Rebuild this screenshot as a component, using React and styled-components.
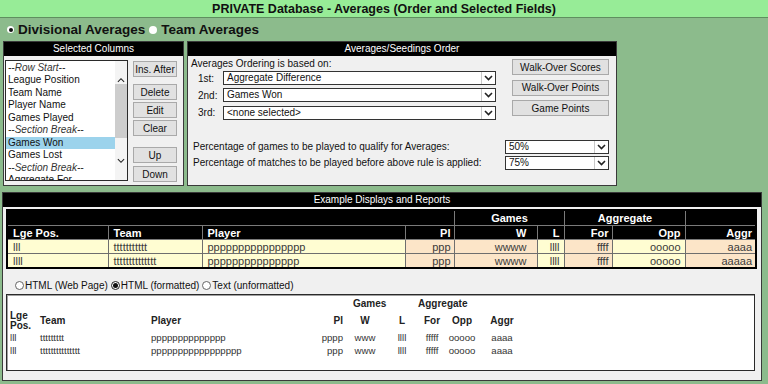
import React from 'react';
import styled, { createGlobalStyle } from 'styled-components';

const GlobalStyle = createGlobalStyle`
  html, body { margin: 0; padding: 0; }
  body {
    background: #8cbb8c;
    font-family: "Liberation Sans", Arial, sans-serif;
    color: #111;
    width: 768px;
    height: 384px;
    overflow: hidden;
  }
`;

const Page = styled.div`
  display: flex;
  flex-direction: column;
`;

const TitleBar = styled.div`
  height: 17px;
  background: #97ec97;
  border-bottom: 1px solid #5f8f5f;
  display: flex;
  align-items: center;
  justify-content: center;
  font-size: 12.5px;
  font-weight: bold;
`;

const ModeRow = styled.div`
  height: 23px;
  display: flex;
  align-items: center;
  padding-left: 7px;
  font-size: 13.5px;
  font-weight: bold;
`;

const ModeOption = styled.label`
  display: flex;
  align-items: center;
  gap: 4px;
  margin-right: 4px;
`;

const Dot = styled.span`
  width: ${p => p.$size}px;
  height: ${p => p.$size}px;
  border-radius: 50%;
  background: #fff;
  box-sizing: border-box;
  border: ${p => (p.$border ? `1px solid ${p.$checked ? '#222' : '#666'}` : 'none')};
  display: inline-flex;
  align-items: center;
  justify-content: center;
  flex: none;
  &::after {
    content: '';
    display: ${p => (p.$checked ? 'block' : 'none')};
    width: ${p => Math.round(p.$size / 2)}px;
    height: ${p => Math.round(p.$size / 2)}px;
    border-radius: 50%;
    background: #111;
  }
`;

const TopRow = styled.div`
  display: flex;
  gap: 3px;
  padding-left: 3px;
  height: 145px;
`;

const Panel = styled.div`
  width: ${p => p.$w}px;
  box-sizing: border-box;
  border: 1px solid #3a3a3a;
  background: #f0f0f0;
  display: flex;
  flex-direction: column;
`;

const PanelHeader = styled.div`
  height: 14px;
  line-height: 14px;
  background: #000;
  color: #fff;
  font-size: 10px;
  text-align: center;
`;

const ColumnsBody = styled.div`
  display: flex;
  padding: 4px 0 0 1px;
`;

const ListBox = styled.div`
  width: 123px;
  height: 121px;
  box-sizing: border-box;
  border: 1px solid #2a2a2a;
  background: #fff;
  display: flex;
  overflow: hidden;
`;

const ListItems = styled.div`
  flex: 1;
  padding-top: 0.5px;
  overflow: hidden;
`;

const ListItem = styled.div`
  height: 12.5px;
  line-height: 12.5px;
  font-size: 10px;
  padding-left: 2px;
  white-space: nowrap;
  font-style: ${p => (p.$italic ? 'italic' : 'normal')};
  color: ${p => (p.$italic ? '#333' : '#111')};
  background: ${p => (p.$selected ? '#9cd3ec' : 'transparent')};
`;

const ScrollBar = styled.div`
  width: 12px;
  background: #f4f4f4;
  display: flex;
  flex-direction: column;
  align-items: center;
`;

const ScrollArrow = styled.div`
  height: 22px;
  display: flex;
  align-items: ${p => (p.$down ? 'flex-start' : 'flex-end')};
  justify-content: center;
`;

const ScrollThumb = styled.div`
  width: 12px;
  height: 54px;
  margin-top: 1px;
  background: #cdcdcd;
`;

const ScrollSpace = styled.div`
  flex: 1;
`;

const ButtonStack = styled.div`
  display: flex;
  flex-direction: column;
  margin-left: 5px;
  width: 44px;
`;

const Btn = styled.div`
  height: 16px;
  box-sizing: border-box;
  border: 1px solid #a9a9a9;
  background: #e1e1e1;
  font-size: 10px;
  display: flex;
  align-items: center;
  justify-content: center;
  white-space: nowrap;
  margin-top: ${p => p.$gap || 0}px;
  width: ${p => (p.$w ? `${p.$w}px` : 'auto')};
`;

const OrderBody = styled.div`
  display: flex;
  flex-direction: column;
  padding: 2px 7px 0 3px;
`;

const OrderTop = styled.div`
  display: flex;
`;

const OrderLeft = styled.div`
  width: 306px;
  display: flex;
  flex-direction: column;
`;

const Caption = styled.div`
  font-size: 10px;
  height: 13px;
  line-height: 12px;
`;

const OrderRow = styled.div`
  display: flex;
  align-items: center;
  height: 14px;
  margin-bottom: 3.3px;
`;

const OrderLabel = styled.div`
  width: 25px;
  padding-left: 7px;
  font-size: 10px;
`;

const Select = styled.div`
  width: ${p => p.$w}px;
  height: 14px;
  box-sizing: border-box;
  border: 1px solid #333;
  background: #fff;
  display: flex;
  align-items: stretch;
  font-size: 10px;
`;

const SelectText = styled.div`
  flex: 1;
  padding-left: 3px;
  line-height: 12px;
  white-space: nowrap;
  overflow: hidden;
`;

const SelectArrow = styled.div`
  width: 13px;
  border-left: 1px solid #c8c8c8;
  display: flex;
  align-items: center;
  justify-content: center;
`;

const SideButtons = styled.div`
  display: flex;
  flex-direction: column;
  gap: 4.5px;
  margin-left: 15px;
  padding-top: 1px;
`;

const PercentBlock = styled.div`
  margin-top: 17px;
  display: flex;
  flex-direction: column;
  gap: 2px;
`;

const PercentRow = styled.div`
  display: flex;
  align-items: center;
  justify-content: space-between;
  padding-left: 2px;
  height: 14px;
  font-size: 10px;
`;

const ExamplePanel = styled(Panel)`
  margin: 6px 0 0 2px;
  height: 189px;
`;

const ExampleBody = styled.div`
  padding: 2px 0 0 3px;
  display: flex;
  flex-direction: column;
`;

const SampleTable = styled.table`
  width: 749px;
  border-collapse: collapse;
  table-layout: fixed;
  border: 2px solid #000;
  font-size: 11px;
`;

const HeadCell = styled.th`
  background: #000;
  color: #fff;
  font-weight: bold;
  height: ${p => p.$h || 13}px;
  padding: 0 ${p => p.$pr ?? 4}px 0 5px;
  border: 1px solid #7a7a7a;
  border-top: none;
  text-align: ${p => p.$align || 'left'};
  white-space: nowrap;
`;

const DataCell = styled.td`
  height: 13px;
  padding: 0 ${p => p.$pr ?? 4}px 0 5px;
  border: 1px solid #6e6e6e;
  background: ${p => (p.$peach ? '#fce5c8' : '#fffdd2')};
  color: #3a3a3a;
  text-align: ${p => p.$align || 'left'};
  white-space: nowrap;
  overflow: hidden;
`;

const FormatRow = styled.div`
  display: flex;
  align-items: center;
  height: 14px;
  margin: 9px 0 2px 9px;
  font-size: 10px;
`;

const FormatOption = styled.label`
  display: flex;
  align-items: center;
  gap: 1px;
  margin-right: 3px;
`;

const PreviewBox = styled.div`
  width: 749px;
  height: 77px;
  box-sizing: border-box;
  border: 1px solid #2a2a2a;
  box-shadow: inset 1px 1px 0 #a0a0a0;
  background: #fff;
  padding: 3px 0 0 3px;
`;

const PreviewTable = styled.table`
  border-collapse: collapse;
  table-layout: fixed;
  font-size: 10px;
  color: #222;
`;

const PHead = styled.th`
  font-weight: bold;
  padding: 0;
  height: ${p => p.$h || 12}px;
  text-align: ${p => p.$align || 'left'};
  line-height: 10px;
  vertical-align: middle;
  padding-left: ${p => p.$pl || 0}px;
  padding-right: ${p => p.$pr || 0}px;
  white-space: nowrap;
`;

const PCell = styled.td`
  padding: 0;
  height: 13px;
  text-align: ${p => p.$align || 'left'};
  padding-left: ${p => p.$pl || 0}px;
  padding-right: ${p => p.$pr || 0}px;
  white-space: nowrap;
  font-size: 9.6px;
  color: #333;
`;

const Chevron = ({ up, w = 9, h = 6, stroke = 1.6 }) => (
  <svg width={w} height={h} viewBox="0 0 9 6">
    <polyline
      points={up ? '1,5 4.5,1.5 8,5' : '1,1 4.5,4.5 8,1'}
      fill="none"
      stroke="#222"
      strokeWidth={stroke}
    />
  </svg>
);

const Dropdown = ({ w, children }) => (
  <Select $w={w}>
    <SelectText>{children}</SelectText>
    <SelectArrow>
      <Chevron />
    </SelectArrow>
  </Select>
);

const columns = [
  { text: '--Row Start--', italic: true },
  { text: 'League Position' },
  { text: 'Team Name' },
  { text: 'Player Name' },
  { text: 'Games Played' },
  { text: '--Section Break--', italic: true },
  { text: 'Games Won', selected: true },
  { text: 'Games Lost' },
  { text: '--Section Break--', italic: true },
  { text: 'Aggregate For' },
];

const sampleRows = [
  ['lll', 'ttttttttttt', 'pppppppppppppppp', 'ppp', 'wwww', 'llll', 'ffff', 'ooooo', 'aaaa'],
  ['llll', 'tttttttttttttt', 'ppppppppppppppp', 'ppp', 'wwww', 'llll', 'ffff', 'ooooo', 'aaaaa'],
];

const previewRows = [
  ['lll', 'ttttttttt', 'pppppppppppppp', 'pppp', 'www', 'llll', 'fffff', 'ooooo', 'aaaa'],
  ['lll', 'ttttttttttttttt', 'ppppppppppppppppp', 'ppp', 'www', 'llll', 'fffff', 'ooooo', 'aaaa'],
];

const widths = [101, 94, 203, 49, 83, 27, 48, 73, 71];
const peach = [false, false, false, true, true, false, true, false, true];
const rightPad = [4, 4, 4, 3, 10, 4, 3, 4, 3];
const previewWidths = [30, 111, 165, 27, 44, 30, 30, 30, 50];

export default function App() {
  return (
    <Page>
      <GlobalStyle />
      <TitleBar>PRIVATE Database - Averages (Order and Selected Fields)</TitleBar>
      <ModeRow>
        <ModeOption>
          <Dot $size={7} $checked />
          Divisional Averages
        </ModeOption>
        <ModeOption>
          <Dot $size={8} />
          Team Averages
        </ModeOption>
      </ModeRow>

      <TopRow>
        <Panel $w={181}>
          <PanelHeader>Selected Columns</PanelHeader>
          <ColumnsBody>
            <ListBox>
              <ListItems>
                {columns.map((c, i) => (
                  <ListItem key={i} $italic={c.italic} $selected={c.selected}>
                    {c.text}
                  </ListItem>
                ))}
              </ListItems>
              <ScrollBar>
                <ScrollArrow>
                  <Chevron up w={8} h={6} stroke={1.2} />
                </ScrollArrow>
                <ScrollThumb />
                <ScrollSpace />
                <ScrollArrow $down>
                  <Chevron w={8} h={6} stroke={1.2} />
                </ScrollArrow>
              </ScrollBar>
            </ListBox>
            <ButtonStack>
              <Btn $gap={1}>Ins. After</Btn>
              <Btn $gap={7}>Delete</Btn>
              <Btn $gap={2}>Edit</Btn>
              <Btn $gap={2}>Clear</Btn>
              <Btn $gap={11}>Up</Btn>
              <Btn $gap={3}>Down</Btn>
            </ButtonStack>
          </ColumnsBody>
        </Panel>

        <Panel $w={430}>
          <PanelHeader>Averages/Seedings Order</PanelHeader>
          <OrderBody>
            <OrderTop>
              <OrderLeft>
                <Caption>Averages Ordering is based on:</Caption>
                <OrderRow>
                  <OrderLabel>1st:</OrderLabel>
                  <Dropdown w={273}>Aggregate Difference</Dropdown>
                </OrderRow>
                <OrderRow>
                  <OrderLabel>2nd:</OrderLabel>
                  <Dropdown w={273}>Games Won</Dropdown>
                </OrderRow>
                <OrderRow>
                  <OrderLabel>3rd:</OrderLabel>
                  <Dropdown w={273}>&lt;none selected&gt;</Dropdown>
                </OrderRow>
              </OrderLeft>
              <SideButtons>
                <Btn $w={97}>Walk-Over Scores</Btn>
                <Btn $w={97}>Walk-Over Points</Btn>
                <Btn $w={97}>Game Points</Btn>
              </SideButtons>
            </OrderTop>
            <PercentBlock>
              <PercentRow>
                Percentage of games to be played to qualify for Averages:
                <Dropdown w={104}>50%</Dropdown>
              </PercentRow>
              <PercentRow>
                Percentage of matches to be played before above rule is applied:
                <Dropdown w={104}>75%</Dropdown>
              </PercentRow>
            </PercentBlock>
          </OrderBody>
        </Panel>
      </TopRow>

      <ExamplePanel $w={760}>
        <PanelHeader>Example Displays and Reports</PanelHeader>
        <ExampleBody>
          <SampleTable>
            <colgroup>
              {widths.map((w, i) => (
                <col key={i} style={{ width: w }} />
              ))}
            </colgroup>
            <thead>
              <tr>
                <HeadCell colSpan={4} $h={14} />
                <HeadCell colSpan={2} $h={14} $align="center">Games</HeadCell>
                <HeadCell colSpan={2} $h={14} $align="center">Aggregate</HeadCell>
                <HeadCell $h={14} />
              </tr>
              <tr>
                <HeadCell>Lge Pos.</HeadCell>
                <HeadCell>Team</HeadCell>
                <HeadCell>Player</HeadCell>
                {['Pl', 'W', 'L', 'For', 'Opp', 'Aggr'].map((t, i) => (
                  <HeadCell key={t} $align="right" $pr={rightPad[i + 3]}>
                    {t}
                  </HeadCell>
                ))}
              </tr>
            </thead>
            <tbody>
              {sampleRows.map((row, r) => (
                <tr key={r}>
                  {row.map((v, i) => (
                    <DataCell
                      key={i}
                      $peach={peach[i]}
                      $align={i > 2 ? 'right' : 'left'}
                      $pr={rightPad[i]}
                    >
                      {v}
                    </DataCell>
                  ))}
                </tr>
              ))}
            </tbody>
          </SampleTable>

          <FormatRow>
            <FormatOption>
              <Dot $size={9} $border />
              HTML (Web Page)
            </FormatOption>
            <FormatOption>
              <Dot $size={9} $border $checked />
              HTML (formatted)
            </FormatOption>
            <FormatOption>
              <Dot $size={9} $border />
              Text (unformatted)
            </FormatOption>
          </FormatRow>

          <PreviewBox>
            <PreviewTable>
              <colgroup>
                {previewWidths.map((w, i) => (
                  <col key={i} style={{ width: w }} />
                ))}
              </colgroup>
              <thead>
                <tr>
                  <PHead colSpan={4} />
                  <PHead colSpan={2} $pl={10}>Games</PHead>
                  <PHead colSpan={3} $pl={1}>Aggregate</PHead>
                </tr>
                <tr>
                  <PHead $h={21}>Lge<br />Pos.</PHead>
                  <PHead $h={21}>Team</PHead>
                  <PHead $h={21}>Player</PHead>
                  <PHead $h={21} $align="right">Pl</PHead>
                  <PHead $h={21} $align="center">W</PHead>
                  <PHead $h={21} $align="center">L</PHead>
                  <PHead $h={21} $align="center">For</PHead>
                  <PHead $h={21} $align="center">Opp</PHead>
                  <PHead $h={21} $align="center">Aggr</PHead>
                </tr>
              </thead>
              <tbody>
                {previewRows.map((row, r) => (
                  <tr key={r}>
                    {row.map((v, i) => (
                      <PCell
                        key={i}
                        $align={i === 3 ? 'right' : i > 3 ? 'center' : 'left'}
                      >
                        {v}
                      </PCell>
                    ))}
                  </tr>
                ))}
              </tbody>
            </PreviewTable>
          </PreviewBox>
        </ExampleBody>
      </ExamplePanel>
    </Page>
  );
}
